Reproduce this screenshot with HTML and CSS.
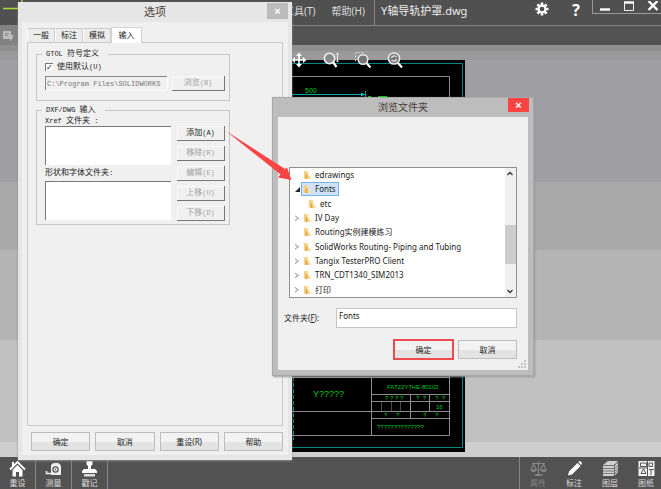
FILE: index.html
```html
<!DOCTYPE html>
<html lang="zh-CN">
<head>
<meta charset="utf-8">
<meta name="viewport" content="width=device-width, initial-scale=1">
<title>Y轴导轨护罩.dwg</title>
<link rel="stylesheet" href="styles.css">
</head>
<body>
<div class="app">
  <header class="menubar">
    <svg class="logo" width="26" height="25" viewBox="0 0 26 25" aria-hidden="true"><path d="M3 8.500H20M22 0V8" stroke="#a4dc32" stroke-width="1.500" fill="none"/></svg>
    <nav class="menus">
      <a href="#tools">工具(T)</a>
      <a href="#help">帮助(H)</a>
    </nav>
    <div class="filename">Y轴导轨护罩.dwg</div>
    <button class="icon-btn" aria-label="设置"><svg width="14" height="14" viewBox="-7 -7 14 14"><g stroke="#fff" stroke-width="2.600"><path d="M0-6.500V6.500M-6.500 0H6.500M-4.600-4.600L4.600 4.600M4.600-4.600L-4.600 4.600"/></g><circle r="4.400" fill="#fff"/><circle r="2.300" fill="#505050"/></svg></button>
    <button class="icon-btn help" aria-label="帮助">?</button>
    <div class="win-controls">
      <button aria-label="最小化"><svg width="12" height="12" viewBox="0 0 12 12"><path d="M1 8.500H11" stroke="#fff" stroke-width="2.400"/></svg></button>
      <button aria-label="最大化"><svg width="12" height="12" viewBox="0 0 12 12"><path d="M1.500 1V9.500H10.500V1" stroke="#eee" fill="none"/><path d="M1 1.500H11" stroke="#fff" stroke-width="2.400"/></svg></button>
      <button aria-label="关闭"><svg width="12" height="12" viewBox="0 0 12 12"><path d="M1.500 0L10.500 9M10.500 0L1.500 9" stroke="#fff" stroke-width="2.400"/></svg></button>
    </div>
  </header>
  <div class="toolbar">
    <button class="doc-btn" aria-label="文档"><svg width="12" height="12" viewBox="0 0 12 12"><path d="M1 1H9V5H11V8L8 11V9H1Z" fill="#bcbcbc"/><path d="M3 3.500H7M3 5.500H6" stroke="#888"/></svg></button>
  </div>
  <main class="canvas">
    <svg class="drawing" width="185" height="392" viewBox="280 60 185 392">
      <rect x="280" y="60" width="185" height="392" fill="#000"/>
      <path d="M280 63.500H462.500V447.500H280" stroke="#0b8588" fill="none"/>
      <path d="M293.500 377V440" stroke="#0b8588" stroke-dasharray="4 2"/>
      <path d="M280 76.500H449.500V435.500H280M280 377.500H449.500M371.500 377V435M371.500 394.500H449.500M371.500 401.500H449.500M280 411.500H449.500M371.500 418.500H449.500M410.500 394V418M429.500 394V411" stroke="#8c8c8c" fill="none"/>
      <path d="M381.500 402V411M391.500 402V411M400.500 402V411" stroke="#484848"/>
      <path d="M280 94.500H365M365.500 91V97" stroke="#00a6aa" fill="none"/><path d="M361 92.500L365 94.500L361 96.500Z" fill="#00c0c4"/>
      <path d="M368 96.500H371M378 96.500H387" stroke="#00c818"/>
      <g class="cad">
        <text x="305" y="93" class="s7">500</text>
        <text x="313" y="397" class="s9">Y?????</text>
        <text x="387" y="389" class="s6">FAT22Y7HE-80102</text>
        <text x="385" y="400" class="s6">? ? ? ?</text>
        <text x="416" y="400" class="s6">?&#160; ?</text>
        <text x="435" y="400" class="s6">?&#160; ?</text>
        <text x="436" y="409" class="s6">16</text>
        <text x="384" y="417" class="s6">?</text><text x="396" y="417" class="s6">?</text>
        <text x="423" y="417" class="s6">?</text><text x="435" y="417" class="s6">?</text>
        <text x="377" y="429" class="s6">??????????????</text>
      </g>
    </svg>
    <div class="view-tools">
      <button aria-label="平移"><svg width="16" height="16" viewBox="-8 -8 16 16"><path d="M0-6V6M-6 0H6" stroke="#fff" stroke-width="1.600"/><path d="M0-7.500L3-4H-3ZM0 7.500L3 4H-3ZM-7.500 0L-4-3V3ZM7.500 0L4-3V3Z" fill="#fff"/></svg></button>
      <button aria-label="缩放"><svg width="16" height="16" viewBox="0 0 16 16"><circle cx="6.500" cy="6.500" r="5.200" stroke="#eee" stroke-width="1.600" fill="#888"/><path d="M10 10L13.500 15" stroke="#fff" stroke-width="2.200"/><path d="M14.500 1V10M13 2.500L14.500 1L16 2.500M13 8.500L14.500 10L16 8.500" stroke="#eee" fill="none"/></svg></button>
      <button aria-label="区域缩放"><svg width="16" height="16" viewBox="0 0 16 16"><path d="M.500 9V.500H9" stroke="#ddd" stroke-dasharray="2 1.500" fill="none"/><circle cx="8" cy="7.500" r="4.800" stroke="#eee" stroke-width="1.500" fill="#777"/><path d="M11.500 11L15.500 15.500" stroke="#fff" stroke-width="2.200"/></svg></button>
      <button aria-label="适合窗口"><svg width="16" height="16" viewBox="0 0 16 16"><circle cx="7" cy="6.500" r="5.600" stroke="#eee" stroke-width="1.500" fill="#777"/><path d="M4.500 6C5 3.500 8 3.500 9.500 5M9.500 7C9 9.500 6 9.500 4.500 8" stroke="#ddd" stroke-width="1.300" fill="none"/><path d="M11 11L15 15.500" stroke="#fff" stroke-width="2.200"/></svg></button>
    </div>
  </main>
  <footer class="bottombar">
    <button><svg width="17" height="17" viewBox="0 0 17 17"><path d="M1 9.500L8.500 2L16 9.500" stroke="#fff" stroke-width="1.800" fill="none"/><path d="M3 2H5V5L3 7ZM3.500 10L8.500 5L13.500 10V16.500H10V12H7V16.500H3.500Z" fill="#fff"/></svg>重设</button>
    <button><svg width="17" height="17" viewBox="0 0 17 17"><path d="M6 5Q7 3 10 3H13Q16 4 16 7V15H6Z" fill="#eee"/><circle cx="10.500" cy="9.500" r="2.600" fill="none" stroke="#505050" stroke-width="1.200"/><circle cx="10.500" cy="9.500" r=".8" fill="#505050"/><path d="M7 13.500H1.500V11" stroke="#eee" stroke-width="1.600" fill="none"/></svg>测量</button>
    <button><svg width="17" height="17" viewBox="0 0 17 17"><path d="M5.500 1H11.500V4.500L10 6V9H14L16 11V13H1V11L3 9H7V6L5.500 4.500Z" fill="#fff"/><path d="M3 14H14V16.500H3Z" fill="#ddd"/></svg>戳记</button>
    <span class="spacer"></span>
    <button class="off" disabled><svg width="17" height="17" viewBox="0 0 17 17"><path d="M8.500 1V14M2 3.500H15M4 15H13M3.500 4L1 10H6.500ZM13.500 4L10.500 10H16Z" stroke="#858585" stroke-width="1.200" fill="none"/><path d="M.500 10H6.500L5 12H2ZM10.500 10H16.500L15 12H12ZM6 14H11V16H6Z" fill="#858585"/></svg>属性</button>
    <button><svg width="17" height="17" viewBox="0 0 17 17"><path d="M2 15.500L3 11.500L11.500 3L14.500 6L6 14.500ZM12.300 2.200L13.500 1Q16 1.500 16 3.800L15.200 5Z" fill="#fff"/></svg>标注</button>
    <button><svg width="17" height="17" viewBox="0 0 17 17"><path d="M1 5L6 1H16L12 5ZM1 5.800H12V16H1ZM12.800 5.500L16 2.200V12L12.800 15.500Z" fill="#d0d0d0"/><path d="M1 8.500H12M1 11H12M1 13.500H12M12.800 8.500L16 5M12.800 11L16 7.500M12.800 13.500L16 10" stroke="#777"/></svg>图层</button>
    <button><svg width="17" height="17" viewBox="0 0 17 17"><path d="M.500 1H16.500V16H.500Z" fill="#f2f2f2"/><path d="M2.500 3H8.500V6.500H2.500ZM3 13.500L5.500 9L8 13.500ZM11 3H14.500V6.500H11ZM9.500 1V16M11 9.500H16M1 8H9M13 9.500V15" stroke="#555" fill="none"/></svg>图纸</button>
  </footer>

  <section class="window options" aria-label="选项">
    <div class="titlebar"><h2>选项</h2><button class="close" aria-label="关闭">×</button></div>
    <div class="client">
      <div class="tabs" role="tablist">
        <button role="tab">一般</button><button role="tab">标注</button><button role="tab">模拟</button><button role="tab" class="active" aria-selected="true">输入</button>
      </div>
      <div class="panel">
        <fieldset>
          <legend><span class="latin">GTOL </span>符号定义</legend>
          <label class="check"><input type="checkbox" checked><span>使用默认<span class="latin">(U)</span></span></label>
          <div class="path-row">
            <input type="text" aria-label="符号文件路径" value="C:\Program Files\SOLIDWORKS" disabled>
            <button class="classic" disabled>浏览<span class="latin">(B)</span></button>
          </div>
        </fieldset>
        <fieldset class="import">
          <legend><span class="latin">DXF/DWG </span>输入</legend>
          <div class="lists">
            <label for="xref"><span class="latin">Xref </span>文件夹<span class="latin"> :</span></label>
            <select id="xref" multiple></select>
            <label for="shape" class="second">形状和字体文件夹<span class="latin">:</span></label>
            <select id="shape" multiple></select>
          </div>
          <div class="actions">
            <button class="classic">添加<span class="latin">(A)</span></button>
            <button class="classic" disabled>移除<span class="latin">(R)</span></button>
            <button class="classic" disabled>编辑<span class="latin">(E)</span></button>
            <button class="classic" disabled>上移<span class="latin">(U)</span></button>
            <button class="classic" disabled>下移<span class="latin">(D)</span></button>
          </div>
        </fieldset>
      </div>
      <div class="buttons">
        <button class="push">确定</button><button class="push">取消</button><button class="push">重设(R)</button><button class="push">帮助</button>
      </div>
    </div>
  </section>

  <section class="window browse" aria-label="浏览文件夹">
    <div class="titlebar"><h2>浏览文件夹</h2><button class="close" aria-label="关闭">×</button></div>
    <div class="client">
      <svg class="defs" width="0" height="0" aria-hidden="true"><symbol id="folder" viewBox="0 0 9 10"><path d="M1 1L4 0V9.500L1 9Z" fill="#f3cf7c"/><path d="M4 .500H6V5L8.500 7V9.500H3Z" fill="#f8dc98"/><path d="M3.500 3L5 5.500V9.500H3Z" fill="#dfa244"/></symbol></svg>
      <div class="tree-box">
        <ul class="tree" role="tree">
          <li><i></i><span class="item"><svg><use href="#folder"/></svg>edrawings</span></li>
          <li><i class="open"></i><span class="item selected"><svg><use href="#folder"/></svg>Fonts</span></li>
          <li class="child"><i></i><span class="item"><svg><use href="#folder"/></svg>etc</span></li>
          <li><i class="closed"></i><span class="item"><svg><use href="#folder"/></svg>IV Day</span></li>
          <li><i></i><span class="item"><svg><use href="#folder"/></svg>Routing实例建模练习</span></li>
          <li><i class="closed"></i><span class="item"><svg><use href="#folder"/></svg>SolidWorks Routing- Piping and Tubing</span></li>
          <li><i class="closed"></i><span class="item"><svg><use href="#folder"/></svg>Tangix TesterPRO Client</span></li>
          <li><i class="closed"></i><span class="item"><svg><use href="#folder"/></svg>TRN_CDT1340_SIM2013</span></li>
          <li><i class="closed"></i><span class="item"><svg><use href="#folder"/></svg>打印</span></li>
        </ul>
        <div class="scroll">
          <svg width="10" height="11" viewBox="0 0 10 11"><path d="M2.500 7L5 4.500L7.500 7" stroke="#333" stroke-width="1.300" fill="none"/></svg>
          <span class="thumb"></span>
          <svg width="10" height="11" viewBox="0 0 10 11"><path d="M2.500 4L5 6.500L7.500 4" stroke="#333" stroke-width="1.300" fill="none"/></svg>
        </div>
      </div>
      <div class="name-row"><label for="folder-name">文件夹(<u>F</u>):</label><input id="folder-name" type="text" value="Fonts"></div>
      <div class="buttons"><button class="push primary">确定</button><button class="push">取消</button></div>
      <svg class="grip" width="8" height="8" viewBox="0 0 8 8" aria-hidden="true"><path d="M6 0H8V2H6ZM6 3H8V5H6ZM3 3H5V5H3ZM6 6H8V8H6ZM3 6H5V8H3ZM0 6H2V8H0Z" fill="#c4c4c4"/></svg>
    </div>
  </section>

  <svg class="arrow" width="66" height="50" viewBox="226 131 66 50" aria-hidden="true"><path d="M226 131L285 169L287 167.500L291.500 180L278 177.500L280.500 174.500Z" fill="#fb4545"/></svg>
</div>
</body>
</html>
```

FILE: styles.css
```css
* { box-sizing: border-box; }
body { margin: 0; overflow: hidden; font: 8px/12px "Noto Sans", "Noto Sans CJK SC", sans-serif; color: #222; }
button, input, select { margin: 0; padding: 0; border: 0; border-radius: 0; font: inherit; color: inherit; background: none; }
svg { display: block; flex: none; }

.app { position: relative; height: 100vh; display: flex; flex-direction: column; overflow: hidden; }

.menubar { height: 26px; display: flex; align-items: flex-start; background: #505050; border-bottom: 1px solid #858585; color: #dcdcdc; font-size: 10px; }
.logo { margin-right: 258px; }
.menus { display: flex; gap: 16px; line-height: 22px; }
.menus a { color: inherit; text-decoration: none; }
.filename { flex: 1; margin-left: 9px; padding-left: 6px; height: 25px; border-left: 1px solid #858585; font-size: 11px; line-height: 22px; color: #eee; }
.icon-btn { width: 14px; margin: 2px 20px 0 0; color: #fff; }
.icon-btn.help { margin: 0 9px 0 0; font: bold 16px/20px "Open Sans", sans-serif; }
.win-controls { display: flex; gap: 12px; height: 14px; padding-left: 6px; width: 69px; border: solid #999; border-width: 0 0 1px 1px; }

.toolbar { height: 19px; background: #525252; }
.doc-btn { width: 18px; height: 19px; padding-left: 2px; background: #828282; }

.canvas { position: relative; flex: 1; background: linear-gradient(#8f8f8f 0 6px, #9a9a9b 6px 15px, #9f9ea3 15px 137px, #a9a9a9 137px 205px, #b4b4b4 205px 295px, #c1c1c1 295px 397px, #cecece 397px); }
.drawing { position: absolute; left: 280px; top: 15px; }
.view-tools { position: absolute; left: 291px; top: 7px; display: flex; gap: 16px; }
.cad { fill: #00c818; font-family: "Liberation Sans Narrow", "Liberation Sans", sans-serif; }
.s6 { font-size: 6px; }
.s7 { font-size: 7px; }
.s9 { font-size: 9px; }

.bottombar { height: 32px; margin-right: -3px; display: flex; background: #525252; color: #ddd; }
.bottombar button { width: 36px; height: 32px; flex: none; display: flex; flex-direction: column; align-items: center; justify-content: flex-start; padding-top: 3px; border-right: 1px solid #858585; line-height: 12px; white-space: nowrap; }
.bottombar .spacer { flex: 1; border-right: 1px solid #858585; }
.bottombar .spacer ~ button { border-right: 0; }
.bottombar .off { color: #808080; }

.window { position: absolute; display: flex; flex-direction: column; }
.window h2 { margin: 0; font-weight: 400; text-align: center; color: #4b3b38; }
.titlebar { position: relative; }
.close { position: absolute; top: 1px; right: 0; width: 21px; color: #fff; font: bold 11px/15px "Liberation Sans", sans-serif; }
.client { background: #f0f0f0; }
.push { height: 19px; border: 1px solid #bdbdbd; background: linear-gradient(#f2f2f2 50%, #e3e3e3 50%); color: #222; }

.options { left: 18px; top: 2px; width: 274px; padding: 0 4px 5px; background: #e6e6e6; box-shadow: 0 1px 2px #888; }
.options h2 { font-size: 11px; line-height: 20px; }
.options .close { background: #bcbcbc; height: 16px; }
.options .client { padding: 5px 5px 4px; font-family: "Liberation Mono", "Noto Sans CJK SC", monospace; }
.latin { font-size: 7px; white-space: pre; }
.tabs { display: flex; align-items: flex-end; }
.tabs button { width: 28px; height: 14px; border: 1px solid #ccc; border-bottom: 0; border-left-color: #fff; background: #ececec; }
.tabs .active { width: 31px; height: 16px; margin-bottom: -1px; position: relative; background: #fff; border-color: #d4d4d4; }
.panel { height: 384px; padding: 5px 52px 0 8px; border: 1px solid #c9c9c9; }
fieldset { min-width: 0; margin: 0 0 3px; padding: 1px 4px 9px 8px; border: 1px solid #c6c6c6; }
legend { margin-left: -3px; padding: 0 9px 0 4px; line-height: 12px; }
.check { display: flex; align-items: center; gap: 4px; height: 12px; margin-bottom: 3px; }
.check input { appearance: none; width: 8px; height: 8px; border: solid #777; border-width: 1px 0 0 1px; background: #fff; }
.check input:checked::after { content: "✓"; display: block; font: bold 8px/7px "DejaVu Sans", sans-serif; color: #111; }
.path-row { display: flex; justify-content: space-between; }
.path-row input { width: 122px; height: 14px; padding-left: 1px; border: solid #858585; border-width: 1px 0 0 1px; font-size: 7px; color: #777; box-shadow: 1px 1px #fff; }
.path-row button { width: 53px; }
.classic { height: 15px; border: solid #777; border-width: 0 1px 1px 0; box-shadow: inset 1px 1px #fafafa; line-height: 13px; }
.classic:disabled { color: #a2a2a2; }
.import { display: flex; justify-content: space-between; padding: 0 4px 3px 8px; }
.lists { width: 126px; display: flex; flex-direction: column; }
.lists label { line-height: 10px; }
.lists .second { margin: 3px 0; }
.lists select { display: block; height: 39px; background: #fff; border: solid #777; border-width: 1px 0 0 1px; overflow: hidden; }
.actions { width: 48px; padding-top: 10px; display: grid; gap: 5px; align-content: start; }
.options .buttons { display: grid; grid-template-columns: repeat(4, 1fr); gap: 5px; padding: 6px 0 0 4px; font-family: "Noto Sans", "Noto Sans CJK SC", sans-serif; }

.browse { left: 272px; top: 97px; width: 262px; padding: 0 5px 5px; background: #bdbdbd; border: 1px solid #a9a9a9; box-shadow: 1px 1px 2px #999; }
.browse h2 { font-size: 10px; line-height: 19px; }
.browse .close { top: 0; right: -1px; height: 14px; line-height: 13px; background: #fa4343; }
.browse .client { position: relative; padding: 50px 11px 10px 11px; }
.defs { position: absolute; }
.tree-box { display: flex; height: 131px; border: 1px solid #909090; background: #fff; }
.tree { flex: 1; margin: 0; padding: 0; list-style: none; display: grid; grid-auto-rows: 1fr; }
.tree li { display: flex; align-items: center; padding-left: 5px; }
.tree .child { padding-left: 10px; }
.tree i { width: 6px; flex: none; }
.tree i::before { content: ""; display: block; width: 4px; height: 6px; }
.tree .closed::before { background: #999; clip-path: polygon(0 0, 100% 50%, 0 100%, 0 80%, 60% 50%, 0 20%); }
.tree .open::before { width: 5px; height: 5px; background: #222; clip-path: polygon(100% 0, 100% 100%, 0 100%); }
.item { display: flex; align-items: center; gap: 4px; height: 14px; padding: 0 2px 0 1px; border: 1px solid transparent; white-space: nowrap; }
.item svg { width: 8px; height: 10px; }
.selected { background: #cfe3fb; border-color: #78b2ea; }
.scroll { width: 11px; display: flex; flex-direction: column; background: #f0f0f0; }
.thumb { height: 39px; margin: auto 0 22px; background: #cdcdcd; }
.name-row { display: flex; align-items: center; justify-content: space-between; margin: 10px 0 11px -5px; }
.name-row input { width: 181px; height: 20px; padding: 0 0 5px 2px; border: 1px solid #c4c4c4; background: #fff; }
.browse .buttons { display: flex; justify-content: flex-end; align-items: center; gap: 4px; }
.browse .push { width: 59px; }
.browse .primary { width: 61px; height: 21px; border: 2px solid #ee4a4e; }
.grip { position: absolute; right: 2px; bottom: 2px; }

.arrow { position: absolute; left: 226px; top: 131px; pointer-events: none; }
```
